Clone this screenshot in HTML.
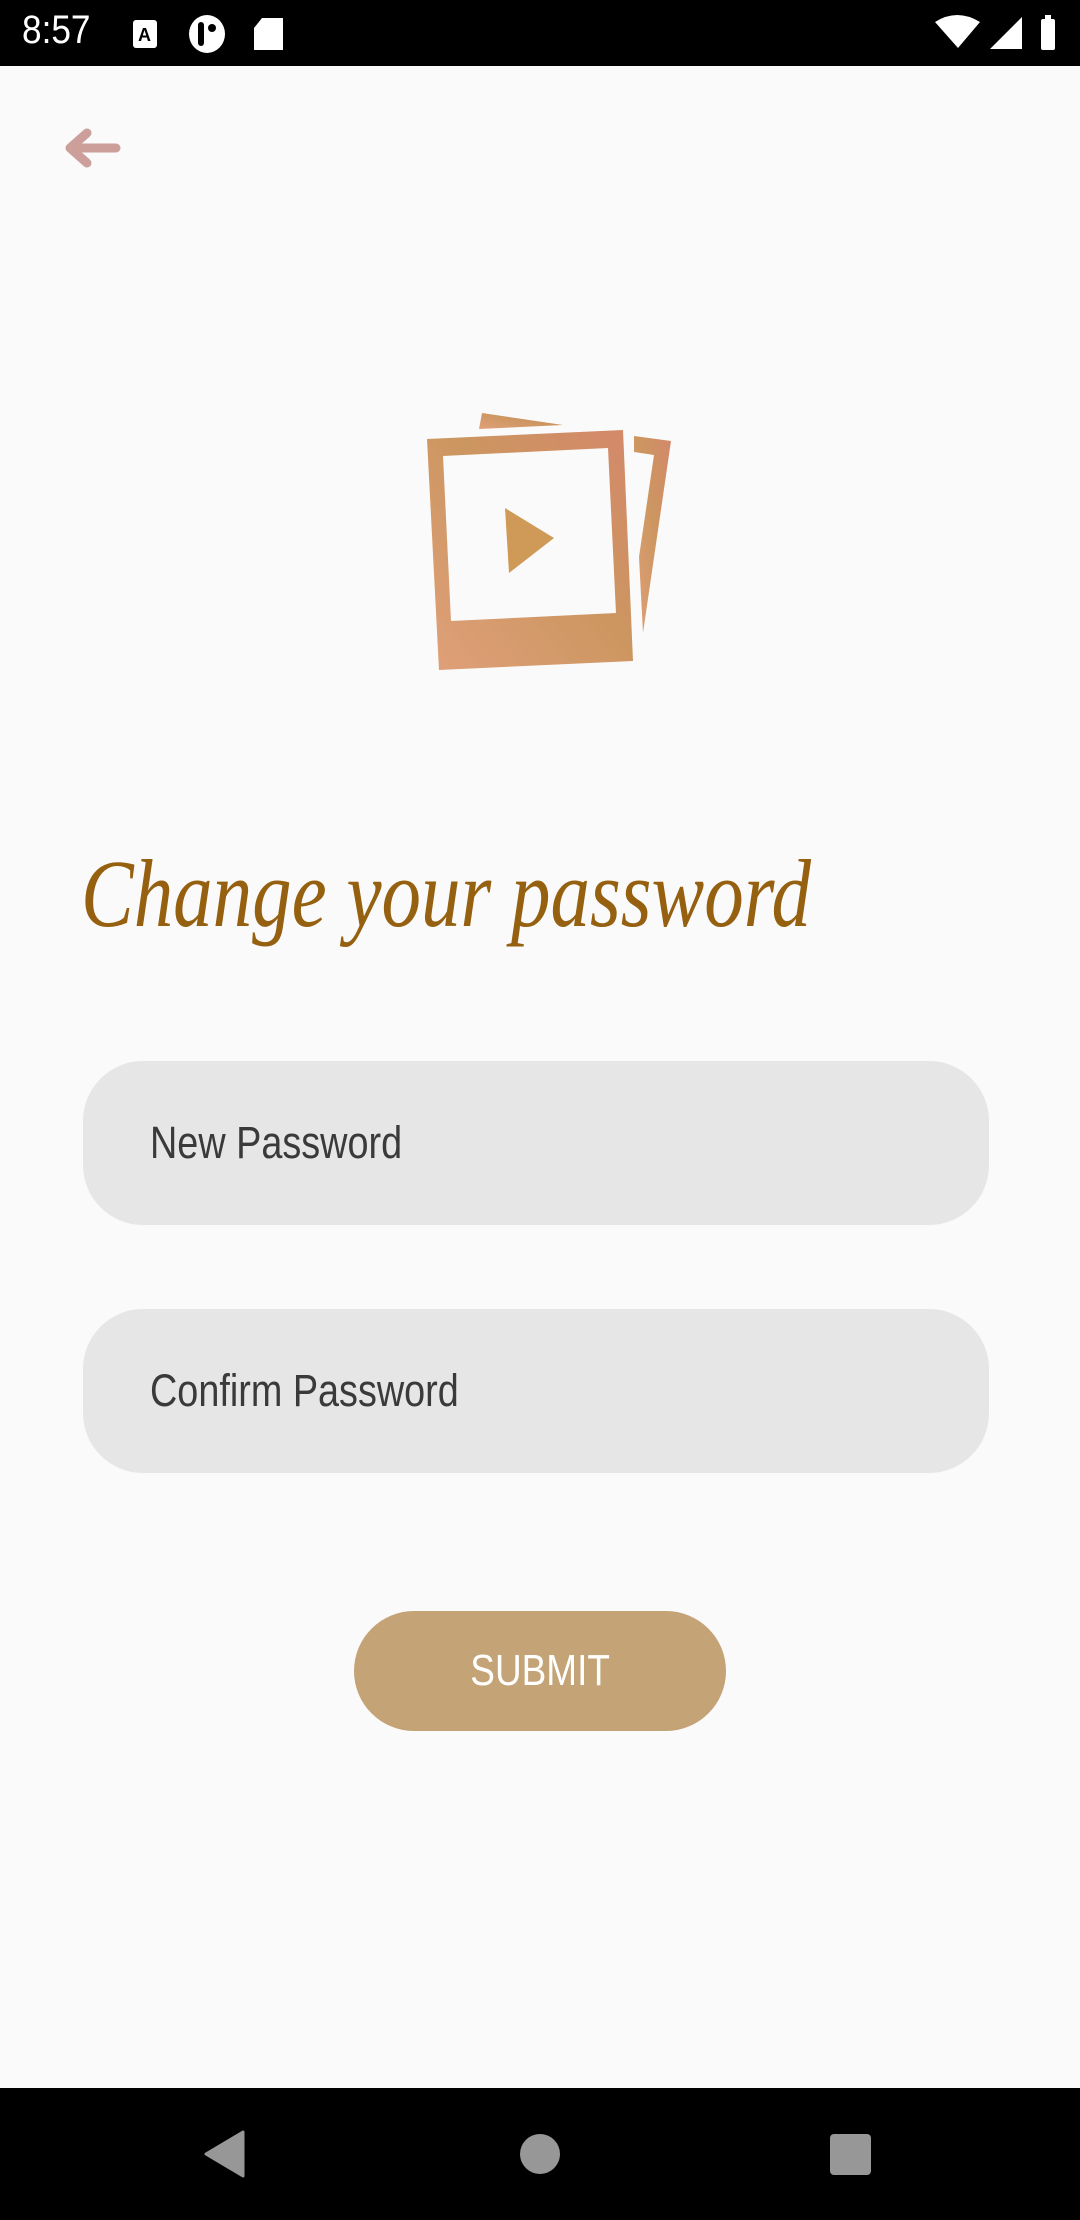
<!DOCTYPE html>
<html><head><meta charset="utf-8"><style>
html,body{margin:0;padding:0;}
body{width:1080px;height:2220px;background:#fafafa;position:relative;overflow:hidden;font-family:"Liberation Sans",sans-serif;}
.abs{position:absolute;}
.field{position:absolute;left:83px;width:906px;height:164px;border-radius:60px;background:#e6e6e6;}
.field span{position:absolute;left:67px;top:50%;transform:translateY(-50%) scaleX(0.84);transform-origin:left center;font-size:45px;color:#3a3a3a;white-space:nowrap;}
</style></head><body>
<div class="abs" style="left:0;top:0;width:1080px;height:66px;background:#000;"></div>
<div class="abs" style="left:22px;top:8px;color:#fff;font-size:40px;transform:scaleX(0.88);transform-origin:left;">8:57</div>
<svg class="abs" style="left:0;top:0" width="1080" height="66">
 <rect x="133" y="20" width="24" height="28" rx="3" fill="#fff"/><text x="138" y="41" font-size="18" font-weight="bold" fill="#000" font-family="Liberation Sans">A</text>
 <ellipse cx="207" cy="34" rx="18" ry="19" fill="#fff"/><rect x="198" y="22" width="6" height="24" rx="3" fill="#000"/><circle cx="212" cy="28" r="4" fill="#000"/>
 <path d="M262 18 H283 V50 H254 V28 Z" fill="#fff"/>
 <path d="M935 22 Q957 8 980 22 L958 48 Z" fill="#fff"/>
 <path d="M1022 17 V49 H990 Z" fill="#fff"/>
 <rect x="1041" y="19" width="14" height="31" rx="2" fill="#fff"/><rect x="1045" y="15" width="6" height="5" fill="#fff"/>
</svg>
<svg class="abs" style="left:62px;top:124px" width="62" height="48"><path d="M8 24 H54 M25 9 L8 24 L25 39" stroke="#c48e8a" stroke-width="9" fill="none" stroke-linecap="round" stroke-linejoin="round" opacity="0.85"/></svg>
<svg class="abs" style="left:0;top:0" width="1080" height="700">
 <defs><linearGradient id="g" x1="0" y1="1" x2="1" y2="0"><stop offset="0" stop-color="#e0a07a"/><stop offset="0.55" stop-color="#cc9660"/><stop offset="1" stop-color="#d4886a"/></linearGradient></defs>
 <path fill-rule="evenodd" fill="url(#g)" d="M427 439 L623 430 L633 661 L439 670 Z M443 456 L451 621 L616 613 L608 448 Z"/>
 <path fill="#cf9a58" d="M505 508 L554 538 L509 573 Z"/>
 <path fill="url(#g)" d="M482 413 L563 425 L479 429 Z"/>
 <path fill="url(#g)" d="M634 436 L671 441 L643 633 L639 557 L654 455 L634 452 Z"/>
</svg>
<svg class="abs" style="left:0;top:830px" width="1080" height="160">
 <text x="81" y="96" font-family="Liberation Serif" font-style="italic" font-size="96" fill="#95600f" textLength="730" lengthAdjust="spacingAndGlyphs">Change your password</text>
</svg>
<div class="field" style="top:1061px;"><span>New Password</span></div>
<div class="field" style="top:1309px;"><span>Confirm Password</span></div>
<div class="abs" style="left:354px;top:1611px;width:372px;height:120px;border-radius:60px;background:#c4a376;"></div>
<div class="abs" style="left:354px;top:1611px;width:372px;height:120px;line-height:120px;text-align:center;color:#fff;font-size:44px;"><span style="display:inline-block;transform:scaleX(0.84);">SUBMIT</span></div>
<div class="abs" style="left:0;top:2088px;width:1080px;height:132px;background:#000;"></div>
<svg class="abs" style="left:0;top:2088px" width="1080" height="132">
 <path d="M243 44 V88 L206 66 Z" fill="#979797" stroke="#979797" stroke-width="3" stroke-linejoin="round"/>
 <circle cx="540" cy="66" r="20" fill="#979797"/>
 <rect x="830" y="46" width="41" height="41" rx="4" fill="#979797"/>
</svg>
</body></html>
